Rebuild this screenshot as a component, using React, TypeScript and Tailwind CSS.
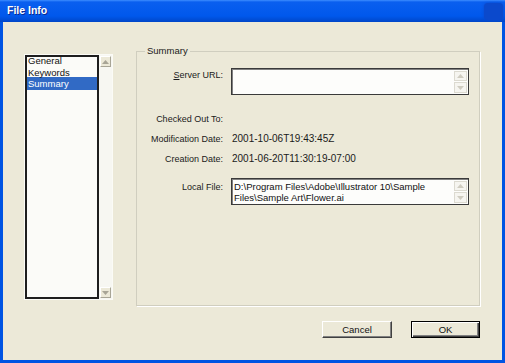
import React from "react"

const Arrow = ({ down, color }: { down?: boolean; color: string }) => (
    <svg width="7" height="4" viewBox="0 0 7 4">
        {down
            ? <polygon points="0,0 7,0 3.5,4" fill={color} />
            : <polygon points="0,4 7,4 3.5,0" fill={color} />}
    </svg>
)

// little scroll button of the list box
const ScrollButton = ({ down }: { down?: boolean }) => (
    <div className="w-[11px] h-[11px] bg-[#ECE9D8] border-r border-b border-r-[#A8A596] border-b-[#A8A596] border-t border-l border-t-white border-l-white flex items-center justify-center">
        <Arrow down={down} color="#A8A596" />
    </div>
)

// disabled arrows inside the edit boxes
const FadedArrows = () => (
    <div className="w-[13px] flex flex-col gap-[1px] mr-[1px] mt-[1px]">
        <div className="h-[10px] border border-[#DCDAD0] bg-[#F6F5F0] flex items-center justify-center">
            <Arrow color="#CFCCC0" />
        </div>
        <div className="h-[11px] border border-[#DCDAD0] bg-[#F6F5F0] flex items-center justify-center">
            <Arrow down color="#CFCCC0" />
        </div>
    </div>
)

const EditBox = ({ children }: { children?: React.ReactNode }) => (
    <div className="w-[238px] h-[27px] border border-[#3A3A3A] bg-[#FDFDFB]">
        <div className="h-full border-t border-l border-t-[#808080] border-l-[#808080] flex">
            <div className="flex-1 pl-[1px] pt-[1px] text-[9.5px] leading-[11px] text-[#111]">{children}</div>
            <FadedArrows />
        </div>
    </div>
)

const Label = ({ text, className = "" }: { text: React.ReactNode; className?: string }) => (
    <div className={"w-[86px] text-right text-[9px] leading-[12px] text-[#1a1a1a] " + className}>{text}</div>
)

const items = ["General", "Keywords", "Summary"]

const App = () => {
    return <div className="w-[505px] h-[363px] flex flex-col bg-[#0054E3] font-['Liberation_Sans',Arial,sans-serif] select-none">
        <div className="h-[22px] flex items-center bg-[linear-gradient(to_bottom,#3D8DFF_0px,#0A5FEF_2px,#0058EC_16px,#0046C8_22px)]">
            <span className="ml-[7px] text-white font-bold text-[10.5px] [text-shadow:1px_1px_0_#0B2A8F]">File Info</span>
            <div className="ml-auto mr-[2px] w-[19px] h-[17px] rounded-[4px] bg-[#0B49CC] shadow-[0_0_3px_#0B49CC]" />
        </div>
        <div className="flex-1 mx-[3px] mb-[3px] bg-[#ECE9D8] flex flex-col pl-[21px] pr-[22px] pt-[29px]">
            <div className="flex items-start">
                {/* list box */}
                <div className="mt-[3px] w-[89px] h-[246px] border border-[#FBFBF6] flex">
                    <div className="w-[74px] h-full border-2 border-[#1E1E1E] bg-[#FBFBF8] overflow-hidden">
                        <div className="-mt-[2px]">
                            {items.map((item, i) => (
                                <div key={item} className={"pl-[1px] text-[9.5px] " + (i === 2 ? "bg-[#316AC5] text-white -mt-[2px] leading-[13px]" : "text-[#111] leading-[12px]")}>{item}</div>
                            ))}
                        </div>
                    </div>
                    <div className="w-[13px] h-full bg-[#F7F7F2] flex flex-col items-center justify-between py-[1px]">
                        <ScrollButton />
                        <ScrollButton down />
                    </div>
                </div>

                {/* group box */}
                <div className="relative ml-[23px] w-[344px] h-[255px] border border-[#D0CEBF] shadow-[1px_1px_0_#FFFFFF]">
                    <span className="absolute left-[8px] -top-[7px] px-[2px] bg-[#ECE9D8] text-[9.5px] leading-[12px] text-[#1a1a1a]">Summary</span>
                    <div className="flex flex-col mt-[16px]">
                        <div className="flex items-start">
                            <Label text={<><span className="underline">S</span>erver URL:</>} className="mt-[1px]" />
                            <div className="ml-[8px]"><EditBox /></div>
                        </div>
                        <div className="flex mt-[18px]">
                            <Label text="Checked Out To:" />
                        </div>
                        <div className="flex mt-[8px]">
                            <Label text="Modification Date:" />
                            <div className="ml-[9px] text-[10px] leading-[12px] text-[#1a1a1a]">2001-10-06T19:43:45Z</div>
                        </div>
                        <div className="flex mt-[8px]">
                            <Label text="Creation Date:" />
                            <div className="ml-[9px] text-[10px] leading-[12px] text-[#1a1a1a]">2001-06-20T11:30:19-07:00</div>
                        </div>
                        <div className="flex items-start mt-[13px]">
                            <Label text="Local File:" className="mt-[3px]" />
                            <div className="ml-[8px]">
                                <EditBox>
                                    D:\Program Files\Adobe\Illustrator 10\Sample<br />
                                    Files\Sample Art\Flower.ai
                                </EditBox>
                            </div>
                        </div>
                    </div>
                </div>
            </div>

            {/* buttons */}
            <div className="flex justify-end gap-[19px] mt-[15px]">
                <button className="w-[70px] h-[17px] bg-[#ECE9D8] border border-t-white border-l-white border-r-[#404040] border-b-[#404040] shadow-[inset_-1px_-1px_0_#808080] text-[9.5px] leading-[12px] text-[#111]">
                    Cancel
                </button>
                <button className="w-[69px] h-[17px] bg-[#ECE9D8] border border-black shadow-[inset_1px_1px_0_#FFFFFF,inset_-1px_-1px_0_#404040,inset_-2px_-2px_0_#808080] text-[9.5px] leading-[12px] text-[#111]">
                    OK
                </button>
            </div>
        </div>
    </div>
}

export default App
